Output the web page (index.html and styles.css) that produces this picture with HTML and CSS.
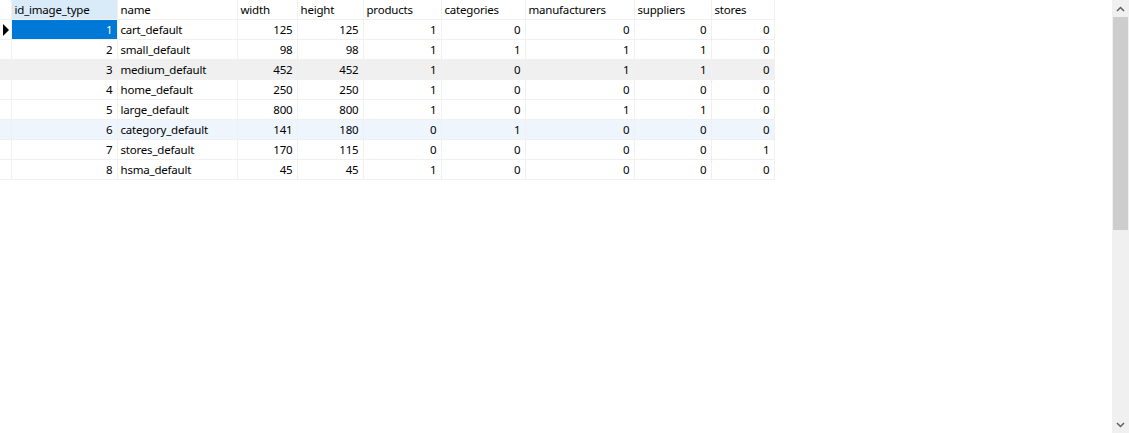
FILE: index.html
```html
<!DOCTYPE html>
<html lang="en">
<head>
  <meta charset="UTF-8" />
  <title>image_type</title>
  <link rel="stylesheet" href="styles.css">
</head>
<body>
  <div class="view">
    <div class="grid-area">
      <table class="grid">
        <colgroup>
          <col style="width:11px">
          <col style="width:106px">
          <col style="width:120px">
          <col style="width:60px">
          <col style="width:66px">
          <col style="width:78px">
          <col style="width:84px">
          <col style="width:109px">
          <col style="width:77px">
          <col style="width:63px">
        </colgroup>
        <thead>
          <tr>
            <th class="ind"></th>
            <th class="sel-col">id_image_type</th>
            <th>name</th>
            <th>width</th>
            <th>height</th>
            <th>products</th>
            <th>categories</th>
            <th>manufacturers</th>
            <th>suppliers</th>
            <th>stores</th>
          </tr>
        </thead>
        <tbody>
          <tr>
            <td class="ind"><span class="arrow"></span></td>
            <td class="num current">1</td><td>cart_default</td>
            <td class="num">125</td><td class="num">125</td><td class="num">1</td><td class="num">0</td><td class="num">0</td><td class="num">0</td><td class="num">0</td>
          </tr>
          <tr>
            <td class="ind"></td>
            <td class="num">2</td><td>small_default</td>
            <td class="num">98</td><td class="num">98</td><td class="num">1</td><td class="num">1</td><td class="num">1</td><td class="num">1</td><td class="num">0</td>
          </tr>
          <tr class="hover">
            <td class="ind"></td>
            <td class="num">3</td><td>medium_default</td>
            <td class="num">452</td><td class="num">452</td><td class="num">1</td><td class="num">0</td><td class="num">1</td><td class="num">1</td><td class="num">0</td>
          </tr>
          <tr>
            <td class="ind"></td>
            <td class="num">4</td><td>home_default</td>
            <td class="num">250</td><td class="num">250</td><td class="num">1</td><td class="num">0</td><td class="num">0</td><td class="num">0</td><td class="num">0</td>
          </tr>
          <tr>
            <td class="ind"></td>
            <td class="num">5</td><td>large_default</td>
            <td class="num">800</td><td class="num">800</td><td class="num">1</td><td class="num">0</td><td class="num">1</td><td class="num">1</td><td class="num">0</td>
          </tr>
          <tr class="focus">
            <td class="ind"></td>
            <td class="num">6</td><td>category_default</td>
            <td class="num">141</td><td class="num">180</td><td class="num">0</td><td class="num">1</td><td class="num">0</td><td class="num">0</td><td class="num">0</td>
          </tr>
          <tr>
            <td class="ind"></td>
            <td class="num">7</td><td>stores_default</td>
            <td class="num">170</td><td class="num">115</td><td class="num">0</td><td class="num">0</td><td class="num">0</td><td class="num">0</td><td class="num">1</td>
          </tr>
          <tr>
            <td class="ind"></td>
            <td class="num">8</td><td>hsma_default</td>
            <td class="num">45</td><td class="num">45</td><td class="num">1</td><td class="num">0</td><td class="num">0</td><td class="num">0</td><td class="num">0</td>
          </tr>
        </tbody>
      </table>
    </div>
    <div class="vscroll">
      <div class="sb-btn">
        <svg width="9" height="6" viewBox="0 0 9 6"><path d="M1 5 L4.5 1.5 L8 5" fill="none" stroke="#606060" stroke-width="1.5"/></svg>
      </div>
      <div class="sb-track">
        <div class="sb-thumb"></div>
      </div>
      <div class="sb-btn">
        <svg width="9" height="6" viewBox="0 0 9 6"><path d="M1 1 L4.5 4.5 L8 1" fill="none" stroke="#606060" stroke-width="1.5"/></svg>
      </div>
    </div>
  </div>
</body>
</html>
```

FILE: styles.css
```css
html, body {
  margin: 0;
  height: 100%;
  background-color: #ffffff;
}

body {
  font-family: 'Noto Sans', 'Open Sans', sans-serif;
  font-size: 11.5px;
  letter-spacing: -0.2px;
  color: #000000;
}

.view {
  display: flex;
  height: 433px;
}

.grid-area {
  flex: 1;
  overflow: hidden;
}

.grid {
  border-collapse: collapse;
  table-layout: fixed;
  width: 774px;
}

.grid th,
.grid td {
  height: 19px;
  padding: 0 3px 0 3px;
  border-right: 1px solid #f0f0f0;
  border-bottom: 1px solid #f0f0f0;
  white-space: nowrap;
  overflow: hidden;
  line-height: 19px;
  box-sizing: border-box;
}

.grid th {
  font-weight: normal;
  text-align: left;
  background-color: #ffffff;
}

.grid th.sel-col {
  background-color: #d9ebf9;
}

.grid td.num {
  text-align: right;
  padding-right: 4px;
}

.grid .ind {
  padding: 0;
  position: relative;
}

.arrow {
  position: absolute;
  left: 3px;
  top: 4px;
  width: 0;
  height: 0;
  border-top: 6px solid transparent;
  border-bottom: 6px solid transparent;
  border-left: 6px solid #000000;
}

.grid tr.hover td {
  background-color: #f0f0f0;
}

.grid tr.focus td {
  background-color: #eef5fd;
}

.grid td.current {
  background-color: #0078d7;
  color: #ffffff;
}

.vscroll {
  width: 17px;
  display: flex;
  flex-direction: column;
  background-color: #f0f0f0;
}

.sb-btn {
  height: 17px;
  display: flex;
  align-items: center;
  justify-content: center;
}

.sb-track {
  flex: 1;
}

.sb-thumb {
  height: 213px;
  margin: 0 1px;
  background-color: #cdcdcd;
}
```
